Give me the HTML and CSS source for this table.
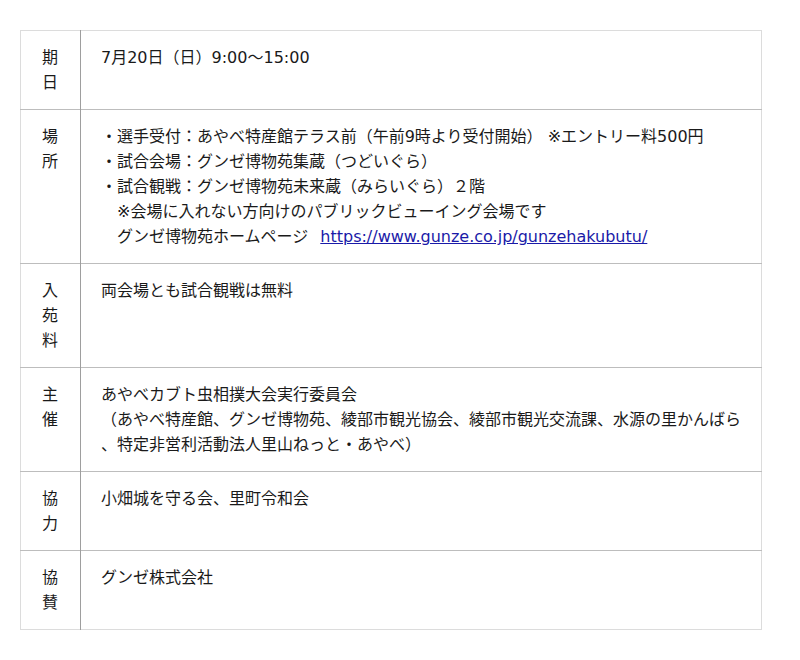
FILE: index.html
```html
<!DOCTYPE html>
<html lang="ja">
<head>
<meta charset="utf-8">
<link rel="stylesheet" href="styles.css">
</head>
<body>
<table class="info">
  <tr>
    <th>期日</th>
    <td>7月20日（日）9:00～15:00</td>
  </tr>
  <tr>
    <th>場所</th>
    <td>・選手受付：あやべ特産館テラス前（午前9時より受付開始） ※エントリー料500円<br>・試合会場：グンゼ博物苑集蔵（つどいぐら）<br>・試合観戦：グンゼ博物苑未来蔵（みらいぐら）２階<br>　※会場に入れない方向けのパブリックビューイング会場です<br>　グンゼ博物苑ホームページ <a class="link" href="https://www.gunze.co.jp/gunzehakubutu/">https://www.gunze.co.jp/gunzehakubutu/</a></td>
  </tr>
  <tr>
    <th>入苑料</th>
    <td>両会場とも試合観戦は無料</td>
  </tr>
  <tr>
    <th>主催</th>
    <td class="anywhere">あやべカブト虫相撲大会実行委員会<br>（あやべ特産館、グンゼ博物苑、綾部市観光協会、綾部市観光交流課、水源の里かんばら、特定非営利活動法人里山ねっと・あやべ）</td>
  </tr>
  <tr>
    <th>協力</th>
    <td>小畑城を守る会、里町令和会</td>
  </tr>
  <tr>
    <th>協賛</th>
    <td>グンゼ株式会社</td>
  </tr>
</table>
</body>
</html>
```

FILE: styles.css
```css
html, body {
  margin: 0;
  padding: 0;
  background: #fff;
}
body {
  padding: 30px 38px 0 20px;
  font-family: "DejaVu Sans", "Noto Sans CJK JP", sans-serif;
  font-size: 16px;
  line-height: 25px;
  color: #1a1a1a;
}
.info {
  width: 742px;
  border-collapse: collapse;
  border: 1px solid #dcdcdc;
  table-layout: fixed;
}
.info th,
.info td {
  vertical-align: top;
  padding: 14px 14px 14px 20px;
  border-top: 1px solid #bdbdbd;
  text-align: left;
  font-weight: normal;
}
.info tr:first-child th,
.info tr:first-child td {
  border-top: 1px solid #dcdcdc;
}
.info th {
  width: 20px;
  padding: 14px 20px 14px 19px;
  text-align: center;
  border-right: 1px solid #9e9e9e;
  word-break: break-all;
}
.info td.anywhere {
  line-break: anywhere;
}
.info a {
  color: #1a1aa8;
}
.info .link {
  margin-left: 7px;
}
```
